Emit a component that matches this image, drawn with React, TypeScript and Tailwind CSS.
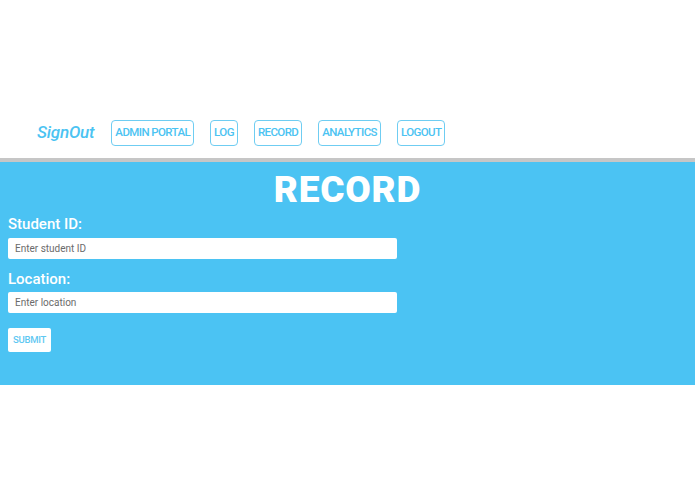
import React from "react";

const font = { fontFamily: "Roboto, 'Liberation Sans', sans-serif" };

export default function App() {
  const links = ["ADMIN PORTAL", "LOG", "RECORD", "ANALYTICS", "LOGOUT"];
  return (
    <div className="w-[695px] h-[494px] bg-white" style={font}>
      <header className="h-[158px] flex items-end pb-[12px] pl-[37px]">
        <div className="flex items-center h-[26px]">
          <span className="text-[17px] italic font-medium text-[#4bc3f2] mr-[17px] tracking-[-0.2px]">SignOut</span>
          <nav className="flex items-center gap-[16px]">
            {links.map((l) => (
              <button
                key={l}
                className="h-[26px] px-[3px] border-[1.5px] border-[#6fcdf2] rounded-[4px] text-[11.5px] font-medium text-[#4bc3f2] leading-none tracking-[-0.6px]"
              >
                {l}
              </button>
            ))}
          </nav>
        </div>
      </header>
      <div className="h-[4px] bg-[#c6c6c6]" />
      <main className="h-[223px] bg-[#4bc3f3] px-[8px] pt-[8px]">
        <h1 className="text-center text-white text-[37px] leading-[40px] font-black tracking-[0.8px]">RECORD</h1>
        <form className="flex flex-col" onSubmit={(e) => e.preventDefault()}>
          <label className="text-white text-[15px] font-medium leading-[24px] mt-[2px] mb-[2px]">Student ID:</label>
          <input
            className="w-[389px] h-[21px] bg-white rounded-[2px] px-[7px] text-[10px] text-[#333] placeholder:text-[#6b6b6b] outline-none"
            placeholder="Enter student ID"
          />
          <label className="text-white text-[15px] font-medium leading-[24px] mt-[8px] mb-[1px]">Location:</label>
          <input
            className="w-[389px] h-[21px] bg-white rounded-[2px] px-[7px] text-[10px] text-[#333] placeholder:text-[#6b6b6b] outline-none"
            placeholder="Enter location"
          />
          <div className="mt-[13px]">
            <button className="w-[43px] h-[24px] bg-white rounded-[2px] text-[9.5px] font-medium tracking-[-0.3px] text-[#5fc8f2]">SUBMIT</button>
          </div>
        </form>
      </main>
    </div>
  );
}
